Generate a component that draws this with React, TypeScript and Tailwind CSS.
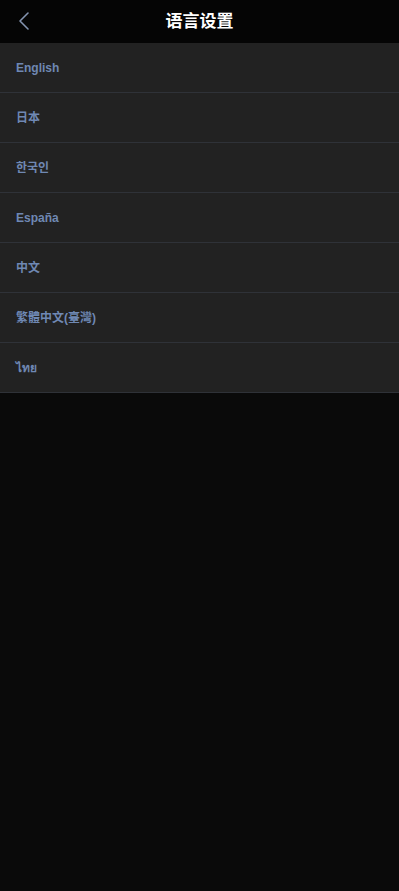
import React from "react";

const langs = ["English", "日本", "한국인", "España", "中文", "繁體中文(臺灣)", "ไทย"];

export default function App() {
  return (
    <div
      className="min-h-[891px] w-full bg-[#0a0a0a]"
      style={{ fontFamily: '"Liberation Sans", Arial, "Noto Sans CJK SC", "Noto Sans", sans-serif' }}
    >
      <div className="relative flex h-[43px] items-center justify-center bg-[#050505]">
        <button className="absolute left-[14px] top-[9px] flex h-[24px] w-[20px] items-center justify-center">
          <svg width="12" height="20" viewBox="0 0 12 20" fill="none">
            <path d="M10 2 L2 10 L10 18" stroke="#8494b0" strokeWidth="1.6" strokeLinecap="round" strokeLinejoin="round" />
          </svg>
        </button>
        <h1 className="text-[17px] font-bold text-white">语言设置</h1>
      </div>
      <ul>
        {langs.map((l) => (
          <li
            key={l}
            className="flex h-[50px] items-center border-b border-[#2f3238] bg-[#222222] pl-[16px] text-[12px] font-bold text-[#6f88b3]"
          >
            {l}
          </li>
        ))}
      </ul>
    </div>
  );
}
